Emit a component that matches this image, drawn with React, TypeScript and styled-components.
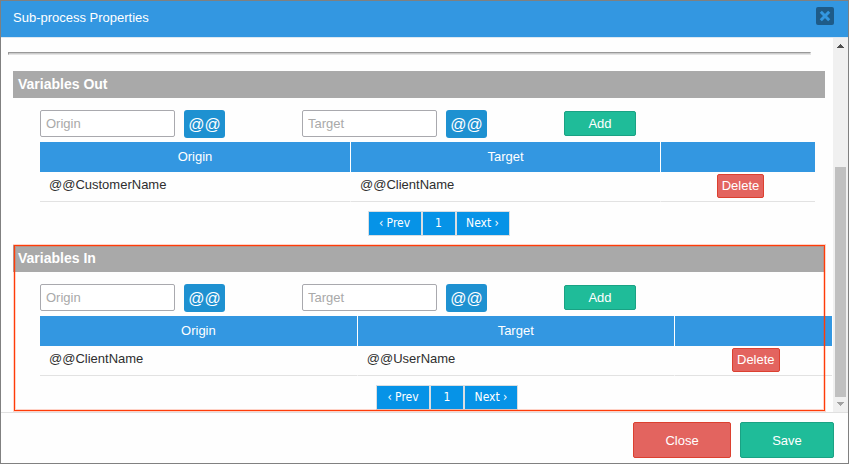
import React from "react";
import styled, { createGlobalStyle } from "styled-components";

const GlobalStyle = createGlobalStyle`
  * { box-sizing: border-box; }
  body {
    margin: 0;
    font-family: "Liberation Sans", Arial, sans-serif;
    font-size: 13px;
    color: #2e2e2e;
  }
  button, input { font: inherit; }
`;

const Dialog = styled.div`
  display: flex;
  flex-direction: column;
  height: 100vh;
  border: 1px solid #808080;
  background: #fefefe;
`;

const Header = styled.header`
  display: flex;
  flex: none;
  align-items: flex-start;
  justify-content: space-between;
  height: 37px;
  padding: 6px 14px 0 12px;
  background: #3397e1;
  border-bottom: 1px solid #dce8f2;
`;

const DialogTitle = styled.h1`
  margin: 0;
  padding-top: 2px;
  color: #fff;
  font-size: 13px;
  font-weight: 400;
  line-height: 18px;
`;

const CloseIcon = styled.button`
  display: flex;
  width: 18px;
  height: 18px;
  padding: 0;
  border: 0;
  border-radius: 2px;
  background: #1e5b88;
`;

const Body = styled.div`
  display: flex;
  flex: 1;
  min-height: 0;
  overflow: hidden;
`;

const Content = styled.main`
  flex: 1;
  min-width: 0;
  overflow: hidden;
  padding: 14px 0 0 7px;
`;

const Divider = styled.hr`
  height: 3px;
  margin: 0 22px 16px 0;
  border: 1px solid;
  border-color: #999 #e4e4e4 #e4e4e4 #999;
  background: #ccc;
`;

const Section = styled.section<{ $highlighted?: boolean }>`
  position: relative;
  padding-left: 5px;
  ${({ $highlighted }) =>
    $highlighted &&
    `
    &::after {
      content: "";
      position: absolute;
      inset: 0 8px 8px 6px;
      border: 1px solid #ff3c08;
      box-shadow: 0 0 0 1px rgba(255, 60, 8, 0.22), inset 0 0 0 1px rgba(255, 60, 8, 0.22);
      pointer-events: none;
    }
  `}
`;

const SectionTitle = styled.h2`
  height: 27px;
  margin: 0 8px 0 0;
  padding-left: 5px;
  background: #a9a9a9;
  color: #fff;
  font-size: 14px;
  font-weight: 700;
  line-height: 27px;
`;

const Fields = styled.div`
  display: grid;
  grid-template-columns: repeat(3, 1fr);
  height: 44px;
  margin: 0 7px 0 27px;
  padding-top: 12px;
`;

const Field = styled.div`
  display: flex;
  align-items: flex-start;
  gap: 9px;
`;

const TextInput = styled.input`
  width: 135px;
  height: 27px;
  padding: 0 5px;
  border: 1px solid #a9a9ae;
  border-radius: 2px;
  background: #fff;
  color: #333;
  &::placeholder { color: #a9a9a9; opacity: 1; }
`;

const VariableButton = styled.button`
  width: 41px;
  height: 28px;
  padding: 1px 0 0;
  border: 0;
  border-radius: 3px;
  background: #1e91d1;
  color: #fff;
  font-size: 16px;
`;

const ActionButton = styled.button<{ $tone: "green" | "red" }>`
  padding: 0;
  border: 1px solid ${({ $tone }) => ($tone === "green" ? "#1aa284" : "#dc4030")};
  border-radius: 2px;
  background: ${({ $tone }) => ($tone === "green" ? "#1fbc99" : "#e3645f")};
  color: #fff;
`;

const AddButton = styled(ActionButton)`
  width: 72px;
  height: 25px;
  margin-top: 1px;
`;

const DeleteButton = styled(ActionButton)`
  display: block;
  height: 24px;
  margin: 0 auto;
  padding: 0 4px;
`;

const FooterButton = styled(ActionButton)<{ $wide?: boolean }>`
  width: ${({ $wide }) => ($wide ? 98 : 94)}px;
  height: 36px;
`;

const Grid = styled.div<{ $inset: number }>`
  margin: 0 ${({ $inset }) => $inset}px 0 27px;
`;

const Table = styled.table`
  width: 100%;
  table-layout: fixed;
  border-spacing: 0;
`;

const HeadCell = styled.th<{ $width: string }>`
  width: ${({ $width }) => $width};
  height: 30px;
  padding: 0 0 2px;
  background: #3397e1;
  color: #fff;
  font-weight: 400;
  & + & { border-left: 1px solid #fff; }
`;

const Cell = styled.td`
  height: 30px;
  padding: 3px 0 2px 9px;
  border-bottom: 1px solid #e2e2e2;
  line-height: 20px;
  vertical-align: top;
  & + & { border-left: 1px solid #fefefe; }
`;

const ActionCell = styled(Cell)`
  padding: 2px 0 3px 5px;
`;

const Pager = styled.nav`
  display: flex;
  justify-content: center;
  padding: 9px 0 9px 22px;
`;

const PageButton = styled.button<{ $narrow?: boolean }>`
  width: ${({ $narrow }) => ($narrow ? 34 : 54)}px;
  height: 25px;
  padding: 0 0 2px;
  border: 1px solid #d9dee2;
  background: #0693e7;
  color: #fff;
  font-family: "DejaVu Sans Condensed", "DejaVu Sans", sans-serif;
  font-size: 12px;
  line-height: 20px;
`;

const Scrollbar = styled.div`
  display: flex;
  flex: none;
  flex-direction: column;
  width: 15px;
  background: #f0f0f0;
`;

const ScrollArrow = styled.svg`
  flex: none;
  width: 15px;
  height: 15px;
`;

const ScrollTrack = styled.div`
  display: flex;
  flex: 1;
  flex-direction: column;
  justify-content: flex-end;
  padding: 0 2px;
`;

const ScrollThumb = styled.div`
  height: 67%;
  background: #c0c0c0;
`;

const Footer = styled.footer`
  display: flex;
  flex: none;
  justify-content: flex-end;
  gap: 9px;
  padding: 9px 14px 5px;
  border-top: 1px solid #e0e0e0;
`;

type VariablesProps = {
  title: string;
  origin: string;
  target: string;
  inset: number;
  highlighted?: boolean;
};

function Variables({ title, origin, target, inset, highlighted }: VariablesProps) {
  return (
    <Section $highlighted={highlighted} aria-label={title}>
      <SectionTitle>{title}</SectionTitle>
      <Fields>
        {["Origin", "Target"].map((name) => (
          <Field key={name}>
            <TextInput type="text" placeholder={name} aria-label={`${title} ${name}`} />
            <VariableButton type="button">@@</VariableButton>
          </Field>
        ))}
        <Field>
          <AddButton type="button" $tone="green">Add</AddButton>
        </Field>
      </Fields>
      <Grid $inset={inset}>
        <Table>
          <thead>
            <tr>
              <HeadCell $width="40%">Origin</HeadCell>
              <HeadCell $width="40%">Target</HeadCell>
              <HeadCell $width="20%" />
            </tr>
          </thead>
          <tbody>
            <tr>
              <Cell>{origin}</Cell>
              <Cell>{target}</Cell>
              <ActionCell>
                <DeleteButton type="button" $tone="red">Delete</DeleteButton>
              </ActionCell>
            </tr>
          </tbody>
        </Table>
        <Pager aria-label={`${title} pages`}>
          <PageButton type="button">‹ Prev</PageButton>
          <PageButton type="button" $narrow>1</PageButton>
          <PageButton type="button">Next ›</PageButton>
        </Pager>
      </Grid>
    </Section>
  );
}

export default function App() {
  return (
    <>
      <GlobalStyle />
      <Dialog role="dialog" aria-label="Sub-process Properties">
        <Header>
          <DialogTitle>Sub-process Properties</DialogTitle>
          <CloseIcon type="button" aria-label="Close dialog">
            <svg width="18" height="18" viewBox="0 0 18 18">
              <path d="M4.8 4.8L13.2 13.2M13.2 4.8L4.8 13.2" stroke="#3397e1" strokeWidth="3" />
            </svg>
          </CloseIcon>
        </Header>
        <Body>
          <Content>
            <Divider />
            <Variables title="Variables Out" origin="@@CustomerName" target="@@ClientName" inset={18} />
            <Variables title="Variables In" origin="@@ClientName" target="@@UserName" inset={1} highlighted />
          </Content>
          <Scrollbar aria-hidden="true">
            <ScrollArrow viewBox="0 0 15 15">
              <path d="M4 10h7v-1h-1v-1h-1v-1h-1v-1h-1v1h-1v1h-1v1h-1z" fill="#505050" />
            </ScrollArrow>
            <ScrollTrack>
              <ScrollThumb />
            </ScrollTrack>
            <ScrollArrow viewBox="0 0 15 15">
              <path d="M4 5h7v1h-1v1h-1v1h-1v1h-1v-1h-1v-1h-1v-1h-1z" fill="#a3a3a3" />
            </ScrollArrow>
          </Scrollbar>
        </Body>
        <Footer>
          <FooterButton type="button" $tone="red" $wide>Close</FooterButton>
          <FooterButton type="button" $tone="green">Save</FooterButton>
        </Footer>
      </Dialog>
    </>
  );
}
